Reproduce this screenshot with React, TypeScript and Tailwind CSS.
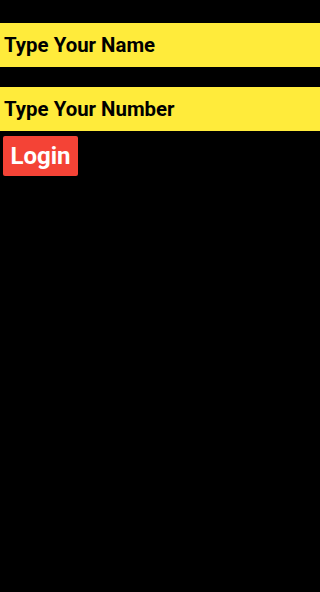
import React from 'react';

export default function App() {
  return (
    <div className="min-h-[592px] bg-black pt-[23px] font-['Roboto',sans-serif]">
      <div className="flex h-[44px] items-center bg-[#ffeb3b] px-1 text-[20.4px] font-bold text-black">
        Type Your Name
      </div>
      <div className="mt-[20px] flex h-[44px] items-center bg-[#ffeb3b] px-1 text-[20.4px] font-bold text-black">
        Type Your Number
      </div>
      <button className="ml-[3px] mt-[5px] flex h-[40px] w-[75px] items-center justify-center rounded-[2px] bg-[#f44336] text-[24px] font-bold text-white">
        Login
      </button>
    </div>
  );
}
